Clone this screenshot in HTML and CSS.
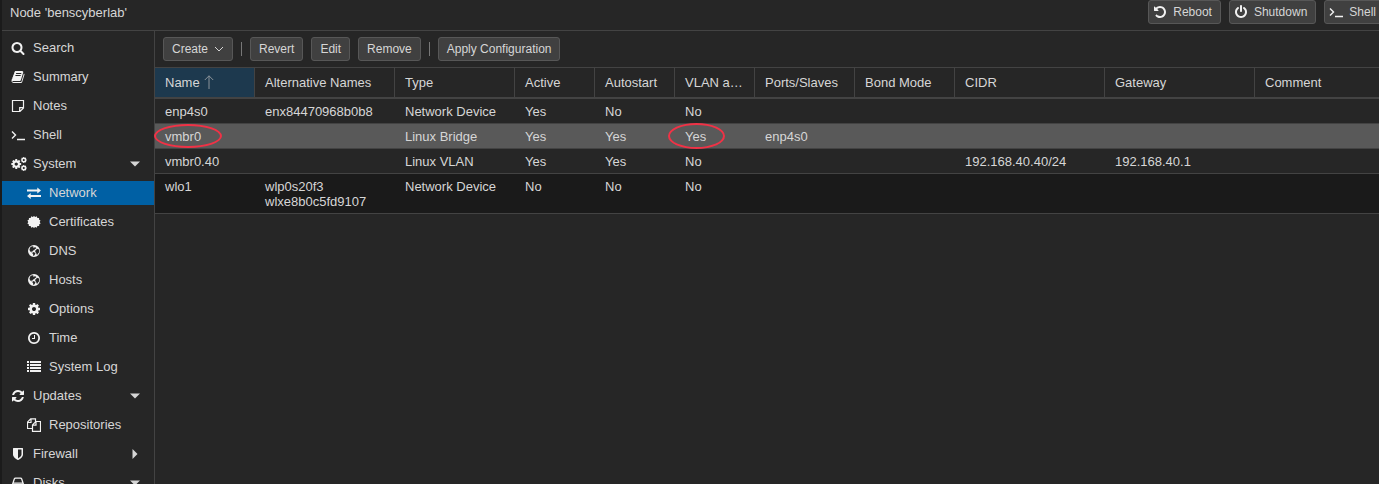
FILE: index.html
```html
<!DOCTYPE html>
<html lang="en">
<head>
<meta charset="utf-8">
<title>Node 'benscyberlab'</title>
<link rel="stylesheet" href="styles.css">
</head>
<body>
<svg class="sprite" aria-hidden="true">
  <symbol id="search" viewBox="0 0 1792 1792"><path d="M1216 832q0-185-131.500-316.500t-316.500-131.500-316.500 131.500-131.500 316.500 131.500 316.500 316.500 131.500 316.500-131.500 131.500-316.500zm512 832q0 52-38 90t-90 38q-54 0-90-38l-343-342q-179 124-399 124-143 0-273.500-55.500t-225-150-150-225-55.500-273.500 55.500-273.500 150-225 225-150 273.500-55.500 273.500 55.500 225 150 150 225 55.500 273.500q0 220-124 399l343 343q37 37 37 90z"/></symbol>
  <symbol id="book" viewBox="0 0 1792 1792"><path d="M1703 478q40 57 18 129l-275 906q-19 64-76.500 107.500t-122.500 43.500h-923q-77 0-148.500-53.500t-99.500-131.500q-24-67-2-127 0-4 3-27t4-37q1-8-3-21.500t-3-19.500q2-11 8-21t16.500-23.500 16.500-23.500q23-38 45-91.500t30-91.500q3-10 .5-30t-.5-28q3-11 17-28t17-23q21-36 42-92t25-90q1-9-2.500-32t.5-28q4-13 22-30.500t22-22.500q19-26 42.500-84.500t27.500-96.500q1-8-3-25.500t-2-26.500q2-8 9-18t18-23 17-21q8-12 16.500-30.500t15-35 16-36 19.500-32 26.500-23.500 36-11.500 47.500 5.500l-1 3q38-9 51-9h761q74 0 114 56t18 130l-274 906q-36 119-71.500 153.500t-128.500 34.500h-869q-27 0-38 15-11 16-1 43 24 70 144 70h923q29 0 56-15.500t35-41.500l300-987q7-22 5-57 38 15 59 43zm-1064 2q-4 13 2 22.500t20 9.500h608q13 0 25.500-9.500t16.500-22.500l21-64q4-13-2-22.500t-20-9.500h-608q-13 0-25.500 9.500t-16.500 22.500zm-83 256q-4 13 2 22.500t20 9.500h608q13 0 25.500-9.500t16.500-22.500l21-64q4-13-2-22.500t-20-9.500h-608q-13 0-25.500 9.500t-16.500 22.500z"/></symbol>
  <symbol id="note" viewBox="0 0 14 14"><path class="line" stroke-width="1.200" d="M1.500 1.500h11v7.500l-3.500 3.500h-7.500zM12.500 8.700h-3.800v3.800"/></symbol>
  <symbol id="terminal" viewBox="0 0 14 14"><path class="line" stroke-width="1.400" d="M1 3.500l3.500 3.500l-3.500 3.500M6 11.500h8"/></symbol>
  <symbol id="cog" viewBox="0 0 1792 1792"><path d="M1152 896q0-106-75-181t-181-75-181 75-75 181 75 181 181 75 181-75 75-181zm512-109v222q0 12-8 23t-20 13l-185 28q-19 54-39 91 35 50 107 138 10 12 10 25t-9 23q-27 37-99 108t-94 71q-12 0-26-9l-138-108q-44 23-91 38-16 136-29 186-7 28-36 28h-222q-14 0-24.500-8.500t-11.500-21.500l-28-184q-49-16-90-37l-141 107q-10 9-25 9-14 0-25-11-126-114-165-168-7-10-7-23 0-12 8-23 15-21 51-66.500t54-70.500q-27-50-41-99l-183-27q-13-2-21-12.500t-8-23.500v-222q0-12 8-23t19-13l186-28q14-46 39-92-40-57-107-138-10-12-10-24 0-10 9-23 26-36 98.500-107.500t94.500-71.500q13 0 26 10l138 107q44-23 91-38 16-136 29-186 7-28 36-28h222q14 0 24.500 8.500t11.500 21.500l28 184q49 16 90 37l142-107q9-9 24-9 13 0 25 10 129 119 165 170 7 8 7 22 0 12-8 23-15 21-51 66.500t-54 70.500q26 50 41 98l183 28q13 2 21 12.500t8 23.500z"/></symbol>
  <symbol id="cogs" viewBox="0 0 16 14"><use href="#cog" x="-0.500" y="1.300" width="11.500" height="11.500"/><use href="#cog" x="9.300" y="-0.500" width="7" height="7"/><use href="#cog" x="9.300" y="7.500" width="7" height="7"/></symbol>
  <symbol id="exchange" viewBox="0 0 14 14"><path d="M0 3.500h10.300V1.500L14 4.500l-3.700 3V5.500H0zM14 9H3.700V7L0 10l3.700 3v-2H14z"/></symbol>
  <symbol id="certificate" viewBox="0 0 14 14"><path d="M7 1l1.200 1.100L9.700 1.300l.7 1.600 1.700 0-.1 1.700 1.500.8L12.700 7l.9 1.500-1.500.9.100 1.700-1.800 0-.7 1.600-1.500-.7L7 13.100 5.800 12l-1.500.7-.7-1.600-1.800 0 .1-1.700-1.500-.9L1.300 7 .4 5.400l1.600-.8-.1-1.700 1.700 0 .7-1.600 1.500.8z"/></symbol>
  <symbol id="globe" viewBox="0 0 14 14"><path fill-rule="evenodd" d="M7 1a6 6 0 1 0 0 12a6 6 0 1 0 0-12zM3.500 3L5.200 2.300l1.300.2-.4.900 1.200.3.500-.8 1.300.8.200.8-1.200.5-1 1.200-1.100.3-.3.900-1.200-.1.300 1.200-1-.5-1-1.300-.3-1.500zM9.300 5.400l1.500-.6 1 .6.500 1.300-.3 1.800-.9.900-.8 1.300-.7-.1-.4-1.700-1-.9.200-1.500zM6 8.100l1.600.5.900 1-.6 1-1 1.400-.6-.2-.2-1.500-.8-1z"/></symbol>
  <symbol id="clock" viewBox="0 0 1792 1792"><path d="M1024 544v448q0 14-9 23t-23 9h-320q-14 0-23-9t-9-23v-64q0-14 9-23t23-9h224v-352q0-14 9-23t23-9h64q14 0 23 9t9 23zm416 352q0-148-73-273t-198-198-273-73-273 73-198 198-73 273 73 273 198 198 273 73 273-73 198-198 73-273zm224 0q0 209-103 385.500t-279.500 279.500-385.500 103-385.500-103-279.500-279.500-103-385.500 103-385.500 279.500-279.500 385.500-103 385.500 103 279.500 279.500 103 385.500z"/></symbol>
  <symbol id="list" viewBox="0 0 14 14"><path d="M0 1h2v2H0zM3 1h11v2H3zM0 4h2v2H0zM3 4h11v2H3zM0 7h2v2H0zM3 7h11v2H3zM0 10h2v2H0zM3 10h11v2H3z"/></symbol>
  <symbol id="refresh" viewBox="0 0 1792 1792"><path d="M1639 1056q0 5-1 7-64 268-268 434.500t-478 166.500q-146 0-282.500-55t-243.500-157l-129 129q-19 19-45 19t-45-19-19-45v-448q0-26 19-45t45-19h448q26 0 45 19t19 45-19 45l-137 137q71 66 161 102t187 36q134 0 250-65t186-179q11-17 53-117 8-23 30-23h192q13 0 22.500 9.500t9.500 22.500zm25-800v448q0 26-19 45t-45 19h-448q-26 0-45-19t-19-45 19-45l138-138q-148-137-349-137-134 0-250 65t-186 179q-11 17-53 117-8 23-30 23h-199q-13 0-22.500-9.500t-9.500-22.500v-7q65-268 270-434.500t480-166.500q146 0 284 55.500t245 156.500l130-129q19-19 45-19t45 19 19 45z"/></symbol>
  <symbol id="files" viewBox="0 0 14 14"><path class="line" stroke-width="1.200" d="M5.500 10.500h-5V4.200L3.700.8h4.800v2.700M4 .8v3.700H.5M5.500 13.300V6.900L8.800 3.500h4.700v9.800zM9 3.500v3.700H5.500"/></symbol>
  <symbol id="shield" viewBox="0 0 1792 1792"><path d="M1344 960v-640h-448v1137q119-63 213-137 235-184 235-360zm192-768v768q0 86-33.500 170.500t-83 150-118 127.500-126.500 103-121 77.500-89.500 49.500-42.500 20q-12 6-26 6t-26-6q-16-7-42.500-20t-89.500-49.500-121-77.500-126.500-103-118-127.500-83-150-33.500-170.500v-768q0-26 19-45t45-19h1152q26 0 45 19t19 45z"/></symbol>
  <symbol id="disk" viewBox="0 0 14 14"><path class="line" stroke-width="1.300" d="M1.600 8.200v3.200q0 1 1 1h8.800q1 0 1-1V8.200q0-1-1-1H2.600q-1 0-1 1L3.300 3q.3-.9 1.200-.9h5q.9 0 1.200.9l1.700 5.200M8 9.800h1M10 9.800h1"/></symbol>
  <symbol id="undo" viewBox="0 0 1792 1792"><path d="M1664 896q0 156-61 298t-164 245-245 164-298 61q-172 0-327-72.500t-264-204.500q-7-10-6.500-22.500t8.500-20.500l137-138q10-9 25-9 16 2 23 12 73 95 179 147t225 52q104 0 198.500-40.500t163.500-109.500 109.500-163.500 40.500-198.500-40.500-198.500-109.500-163.500-163.500-109.500-198.500-40.500q-98 0-188 35.500t-160 101.500l137 138q31 30 14 69-17 40-59 40h-448q-26 0-45-19t-19-45v-448q0-42 40-59 39-17 69 14l130 129q107-101 244.500-156.500t284.500-55.500q156 0 298 61t245 164 164 245 61 298z"/></symbol>
  <symbol id="power" viewBox="0 0 1792 1792"><path d="M1664 896q0 156-61 298t-164 245-245 164-298 61-298-61-245-164-164-245-61-298q0-182 80.500-343t226.500-270q43-32 95.500-25t83.500 50q32 42 24.500 94.500t-49.500 84.500q-98 74-151.500 181t-53.500 228q0 104 40.500 198.500t109.500 163.500 163.500 109.500 198.500 40.500 198.500-40.500 163.500-109.500 109.500-163.500 40.500-198.500q0-121-53.500-228t-151.500-181q-42-32-49.500-84.500t24.500-94.500q31-43 84-50t95 25q146 109 226.500 270t80.500 343zm-640-768v640q0 52-38 90t-90 38-90-38-38-90v-640q0-52 38-90t90-38 90 38 38 90z"/></symbol>
  <symbol id="down" viewBox="0 0 10 10"><path d="M0 2.500h10L5 7.500z"/></symbol>
  <symbol id="right" viewBox="0 0 10 10"><path d="M2.500 0v10L7.500 5z"/></symbol>
  <symbol id="chevron" viewBox="0 0 10 10"><path class="line" d="M1 3l4 4 4-4"/></symbol>
  <symbol id="sort" viewBox="0 0 10 14"><path class="line" d="M5 14V.8M.8 5L5 .8 9.200 5"/></symbol>
</svg>

<header class="node-bar">
  <h1 class="node-title">Node 'benscyberlab'</h1>
  <div class="node-actions">
    <button class="btn btn-icon" type="button"><svg class="icon"><use href="#undo"/></svg>Reboot</button>
    <button class="btn btn-icon" type="button"><svg class="icon"><use href="#power"/></svg>Shutdown</button>
    <button class="btn btn-icon" type="button"><svg class="icon"><use href="#terminal"/></svg>Shell</button>
  </div>
</header>

<div class="workspace">
  <nav class="sidebar" aria-label="Node">
    <a class="nav-item" href="#"><svg class="icon"><use href="#search"/></svg><span class="nav-label">Search</span></a>
    <a class="nav-item" href="#"><svg class="icon"><use href="#book"/></svg><span class="nav-label">Summary</span></a>
    <a class="nav-item" href="#"><svg class="icon"><use href="#note"/></svg><span class="nav-label">Notes</span></a>
    <a class="nav-item" href="#"><svg class="icon"><use href="#terminal"/></svg><span class="nav-label">Shell</span></a>
    <a class="nav-item" href="#"><svg class="icon icon-wide"><use href="#cogs"/></svg><span class="nav-label">System</span><svg class="caret"><use href="#down"/></svg></a>
    <a class="nav-item nav-child nav-active" href="#" aria-current="page"><svg class="icon"><use href="#exchange"/></svg><span class="nav-label">Network</span></a>
    <a class="nav-item nav-child" href="#"><svg class="icon"><use href="#certificate"/></svg><span class="nav-label">Certificates</span></a>
    <a class="nav-item nav-child" href="#"><svg class="icon"><use href="#globe"/></svg><span class="nav-label">DNS</span></a>
    <a class="nav-item nav-child" href="#"><svg class="icon"><use href="#globe"/></svg><span class="nav-label">Hosts</span></a>
    <a class="nav-item nav-child" href="#"><svg class="icon"><use href="#cog"/></svg><span class="nav-label">Options</span></a>
    <a class="nav-item nav-child" href="#"><svg class="icon"><use href="#clock"/></svg><span class="nav-label">Time</span></a>
    <a class="nav-item nav-child" href="#"><svg class="icon"><use href="#list"/></svg><span class="nav-label">System Log</span></a>
    <a class="nav-item" href="#"><svg class="icon"><use href="#refresh"/></svg><span class="nav-label">Updates</span><svg class="caret"><use href="#down"/></svg></a>
    <a class="nav-item nav-child" href="#"><svg class="icon"><use href="#files"/></svg><span class="nav-label">Repositories</span></a>
    <a class="nav-item" href="#"><svg class="icon"><use href="#shield"/></svg><span class="nav-label">Firewall</span><svg class="caret"><use href="#right"/></svg></a>
    <a class="nav-item" href="#"><svg class="icon"><use href="#disk"/></svg><span class="nav-label">Disks</span><svg class="caret"><use href="#down"/></svg></a>
  </nav>

  <main class="panel">
    <div class="toolbar">
      <button class="btn" type="button">Create<svg class="chevron"><use href="#chevron"/></svg></button>
      <span class="divider"></span>
      <button class="btn" type="button">Revert</button>
      <button class="btn" type="button">Edit</button>
      <button class="btn" type="button">Remove</button>
      <span class="divider"></span>
      <button class="btn" type="button">Apply Configuration</button>
    </div>
    <table class="grid">
      <colgroup>
        <col class="w100"><col class="w140"><col class="w120"><col class="w80"><col class="w80"><col class="w80"><col class="w100"><col class="w100"><col class="w150"><col class="w150"><col>
      </colgroup>
      <thead>
        <tr><th class="sorted" aria-sort="ascending">Name<svg class="sort"><use href="#sort"/></svg></th><th>Alternative Names</th><th>Type</th><th>Active</th><th>Autostart</th><th>VLAN aware</th><th>Ports/Slaves</th><th>Bond Mode</th><th>CIDR</th><th>Gateway</th><th>Comment</th></tr>
      </thead>
      <tbody>
        <tr><td>enp4s0</td><td>enx84470968b0b8</td><td>Network Device</td><td>Yes</td><td>No</td><td>No</td><td></td><td></td><td></td><td></td><td></td></tr>
        <tr class="selected"><td>vmbr0<span class="mark mark-name"></span></td><td></td><td>Linux Bridge</td><td>Yes</td><td>Yes</td><td>Yes<span class="mark mark-vlan"></span></td><td>enp4s0</td><td></td><td></td><td></td><td></td></tr>
        <tr><td>vmbr0.40</td><td></td><td>Linux VLAN</td><td>Yes</td><td>Yes</td><td>No</td><td></td><td></td><td>192.168.40.40/24</td><td>192.168.40.1</td><td></td></tr>
        <tr class="alt"><td>wlo1</td><td>wlp0s20f3<br>wlxe8b0c5fd9107</td><td>Network Device</td><td>No</td><td>No</td><td>No</td><td></td><td></td><td></td><td></td><td></td></tr>
      </tbody>
    </table>
  </main>
</div>
</body>
</html>
```

FILE: styles.css
```css
* {
  box-sizing: border-box;
}

body {
  margin: 0;
  height: 100vh;
  overflow: hidden;
  display: flex;
  flex-direction: column;
  border-left: 2px solid #1b1b1b;
  background: #262626;
  color: #d6d6d6;
  font: 13px/15px "Liberation Sans", Arial, sans-serif;
}

svg {
  display: block;
  flex: none;
  fill: currentColor;
}

.sprite {
  position: absolute;
  width: 0;
  height: 0;
}

.line {
  fill: none;
  stroke: currentColor;
}

.icon {
  width: 14px;
  height: 14px;
  color: #f2f2f2;
}

.icon-wide {
  width: 16px;
  margin-right: -2px;
}

.node-bar {
  display: flex;
  flex: none;
  justify-content: space-between;
  overflow: hidden;
  height: 31px;
  padding-left: 8px;
  border-bottom: 1px solid #434343;
}

.node-title {
  margin: 0;
  padding-top: 5px;
  font-size: 13px;
  font-weight: 400;
}

.node-actions {
  display: flex;
  gap: 8px;
  margin-right: -6px;
}

.btn {
  display: flex;
  align-items: center;
  height: 24px;
  padding: 0 8px;
  border: 1px solid #575757;
  border-radius: 3px;
  background: #404040;
  color: #d6d6d6;
  font: 12px/16px "Liberation Sans", Arial, sans-serif;
  white-space: nowrap;
}

.btn-icon {
  gap: 6px;
  padding-left: 4px;
}

.workspace {
  display: flex;
  flex: 1;
  min-height: 0;
}

.sidebar {
  display: flex;
  flex: none;
  flex-direction: column;
  gap: 5px;
  width: 153px;
  padding-top: 5px;
  overflow: hidden;
  border-right: 1px solid #434343;
}

.nav-item {
  display: flex;
  flex: none;
  align-items: center;
  gap: 8px;
  height: 24px;
  padding: 0 14px 0 9px;
  color: inherit;
  text-decoration: none;
}

.nav-child {
  padding-left: 25px;
}

.nav-active {
  background: #0060a4;
}

.nav-label {
  flex: 1;
  padding-bottom: 2px;
}

.caret {
  width: 10px;
  height: 10px;
}

.panel {
  flex: 1;
  min-width: 0;
}

.toolbar {
  display: flex;
  align-items: center;
  gap: 8px;
  padding: 6px 8px;
}

.chevron {
  width: 10px;
  height: 10px;
  margin-left: 6px;
}

.divider {
  width: 1px;
  height: 14px;
  background: #777;
}

.grid {
  width: 100%;
  table-layout: fixed;
  border-collapse: separate;
  border-spacing: 0;
}

.w80 { width: 80px; }
.w100 { width: 100px; }
.w120 { width: 120px; }
.w140 { width: 140px; }
.w150 { width: 150px; }

.grid th {
  height: 32px;
  padding: 0 10px;
  overflow: hidden;
  border: solid #434343;
  border-width: 1px 1px 2px 0;
  font-weight: 400;
  text-align: left;
  text-overflow: ellipsis;
  white-space: nowrap;
}

.grid th:last-child {
  border-right: 0;
}

.grid .sorted {
  background: #1d394e;
}

.sort {
  display: inline-block;
  width: 10px;
  height: 14px;
  margin-left: 4px;
  vertical-align: -2px;
  color: #8b9399;
}

.grid td {
  position: relative;
  padding: 5px 10px 4px;
  border-bottom: 1px solid #434343;
  vertical-align: top;
}

.selected {
  background: #595959;
}

.alt {
  background: #1a1a1a;
}

.mark {
  position: absolute;
  z-index: 1;
  border: 2px solid #f03246;
  border-radius: 50%;
}

.mark-name {
  top: 0;
  left: -1px;
  width: 68px;
  height: 24px;
}

.mark-vlan {
  top: -1px;
  left: -7px;
  width: 57px;
  height: 26px;
}
```
